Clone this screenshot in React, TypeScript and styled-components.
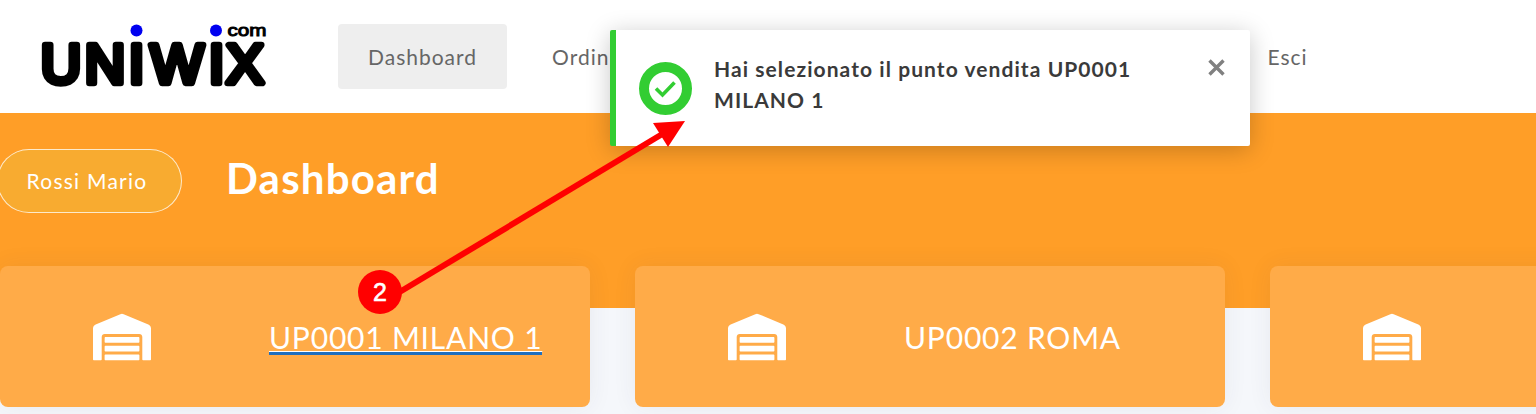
import React from "react";
import styled, { createGlobalStyle } from "styled-components";
import { FaWarehouse } from "react-icons/fa";

const GlobalStyle = createGlobalStyle`
  html, body {
    margin: 0;
    padding: 0;
    background: #f5f7fb;
    font-family: Lato, "Liberation Sans", sans-serif;
  }
`;

const Page = styled.div`
  position: relative;
  width: 1536px;
  height: 414px;
  overflow: hidden;
  background: #f5f7fb;
`;

const Header = styled.header`
  height: 113px;
  background: #fff;
  display: flex;
  align-items: flex-start;
`;

const LogoBox = styled.svg`
  flex: none;
  width: 338px;
  height: 113px;
`;

const Nav = styled.nav`
  display: flex;
  gap: 15px;
  padding-top: 24px;
`;

const NavItem = styled.a<{ $active?: boolean; $push?: number }>`
  display: block;
  height: 65px;
  line-height: 66px;
  padding: 0 30px;
  border-radius: 4px;
  font-size: 21px;
  letter-spacing: 1px;
  color: #666;
  background: ${(p) => (p.$active ? "#eee" : "transparent")};
  margin-left: ${(p) => p.$push ?? 0}px;
`;

const Band = styled.section`
  height: 195px;
  background: #ff9e27;
  display: flex;
  align-items: flex-start;
  gap: 44px;
  padding: 36px 0 0;
  box-sizing: border-box;
`;

const UserPill = styled.div`
  margin-left: -3px;
  width: 185px;
  height: 64px;
  box-sizing: border-box;
  padding-right: 5px;
  border: 1px solid rgba(255, 255, 255, 0.75);
  border-radius: 32px;
  background: #f8ab30;
  color: #fff;
  font-size: 21px;
  letter-spacing: 1.25px;
  line-height: 62px;
  text-align: center;
`;

const Title = styled.h1`
  margin: 0;
  color: #fff;
  font-size: 42px;
  font-weight: 700;
  letter-spacing: 1.2px;
  line-height: 58px;
`;

const CardRow = styled.div`
  display: flex;
  gap: 45px;
  margin-top: -42px;
`;

const Card = styled.div`
  flex: none;
  width: 590px;
  height: 141px;
  display: flex;
  align-items: center;
  border-radius: 8px;
  background: #ffab48;
  box-shadow: 0 0 24px rgba(60, 60, 80, 0.07);
  color: #fff;
`;

const CardIcon = styled.div`
  flex: none;
  width: 269px;
  padding-left: 93px;
  box-sizing: border-box;
  display: flex;
  align-items: center;
  height: 58px;
  margin-top: 1px;
`;

const CardLabel = styled.span<{ $selected?: boolean }>`
  font-size: 30px;
  letter-spacing: 0.8px;
  line-height: 30px;
  white-space: nowrap;
  text-decoration: ${(p) => (p.$selected ? "underline" : "none")};
  text-decoration-thickness: 1px;
  text-underline-offset: 2px;
  border-bottom: 3px solid ${(p) => (p.$selected ? "#1f6fbf" : "transparent")};
  margin-top: 3px;
`;

const Toast = styled.div`
  position: absolute;
  left: 610px;
  top: 30px;
  width: 640px;
  height: 116px;
  box-sizing: border-box;
  display: flex;
  align-items: center;
  padding-left: 23px;
  background: #fff;
  border-left: 6px solid #32cd32;
  border-radius: 2px;
  box-shadow: 0 4px 24px rgba(0, 0, 0, 0.22);
`;

const ToastIcon = styled.svg`
  flex: none;
  width: 53px;
  height: 53px;
  margin-top: 1px;
`;

const ToastText = styled.p`
  margin: 0 0 9px 22px;
  width: 450px;
  color: #3a3a3a;
  font-size: 21px;
  font-weight: 700;
  letter-spacing: 1.07px;
  line-height: 31px;
`;

const ToastClose = styled.svg`
  position: absolute;
  right: 24px;
  top: 29px;
  width: 18px;
  height: 18px;
`;

const Annotation = styled.svg`
  position: absolute;
  left: 0;
  top: 0;
  width: 1536px;
  height: 414px;
  pointer-events: none;
`;

const Badge = styled.div`
  position: absolute;
  left: 358px;
  top: 270px;
  width: 44px;
  height: 44px;
  border-radius: 50%;
  background: #ff0000;
  color: #fff;
  font-family: "Liberation Sans", sans-serif;
  font-size: 25px;
  -webkit-text-stroke: 0.6px #fff;
  line-height: 44px;
  text-align: center;
`;

const logoLetters: [string, number][] = [
  ["U", 61],
  ["N", 105],
  ["I", 136.5],
  ["W", 177],
  ["I", 216.5],
  ["X", 245],
];

const Logo = () => (
  <LogoBox viewBox="0 0 338 113">
    {logoLetters.map(([l, x], i) => (
      <text
        key={i}
        x={x}
        y={82.5}
        textAnchor="middle"
        fontFamily="'Liberation Sans', sans-serif"
        fontSize={56}
        fill="#000"
        stroke="#000"
        strokeWidth={6.5}
        strokeLinejoin="round"
      >
        {l}
      </text>
    ))}
    <circle cx={136.5} cy={30.5} r={6} fill="#0000f0" />
    <circle cx={216} cy={30.5} r={6} fill="#0000f0" />
    <text
      x={227.5}
      y={36}
      textLength={39}
      lengthAdjust="spacingAndGlyphs"
      fontFamily="'Liberation Sans', sans-serif"
      fontSize={17}
      fill="#000"
      stroke="#000"
      strokeWidth={1}
    >
      com
    </text>
  </LogoBox>
);

const App = () => {
  return (
    <Page>
      <GlobalStyle />
      <Header>
        <Logo />
        <Nav>
          <NavItem $active>Dashboard</NavItem>
          <NavItem>Ordini</NavItem>
          <NavItem $push={577}>Esci</NavItem>
        </Nav>
      </Header>
      <Band>
        <UserPill>Rossi Mario</UserPill>
        <Title>Dashboard</Title>
      </Band>
      <CardRow>
        <Card>
          <CardIcon>
            <FaWarehouse size={58} />
          </CardIcon>
          <CardLabel $selected>UP0001 MILANO 1</CardLabel>
        </Card>
        <Card>
          <CardIcon>
            <FaWarehouse size={58} />
          </CardIcon>
          <CardLabel>UP0002 ROMA</CardLabel>
        </Card>
        <Card>
          <CardIcon>
            <FaWarehouse size={58} />
          </CardIcon>
        </Card>
      </CardRow>
      <Toast>
        <ToastIcon viewBox="0 0 53 53">
          <circle cx={26.5} cy={26.5} r={21.5} fill="#fff" stroke="#32cd32" strokeWidth={10} />
          <path d="M17 26.5l6.5 6.5 12-12.5" fill="none" stroke="#32cd32" strokeWidth={3.6} />
        </ToastIcon>
        <ToastText>Hai selezionato il punto vendita UP0001 MILANO 1</ToastText>
        <ToastClose viewBox="0 0 18 18">
          <path d="M1.5 1.5l14 14M15.5 1.5l-14 14" stroke="#808080" strokeWidth={3.4} fill="none" />
        </ToastClose>
      </Toast>
      <Annotation viewBox="0 0 1536 414">
        <line x1={398} y1={293} x2={664} y2={133} stroke="#ff0000" strokeWidth={6} />
        <polygon points="653,123 685,121 668,147" fill="#ff0000" />
      </Annotation>
      <Badge>2</Badge>
    </Page>
  );
};

export default App;
